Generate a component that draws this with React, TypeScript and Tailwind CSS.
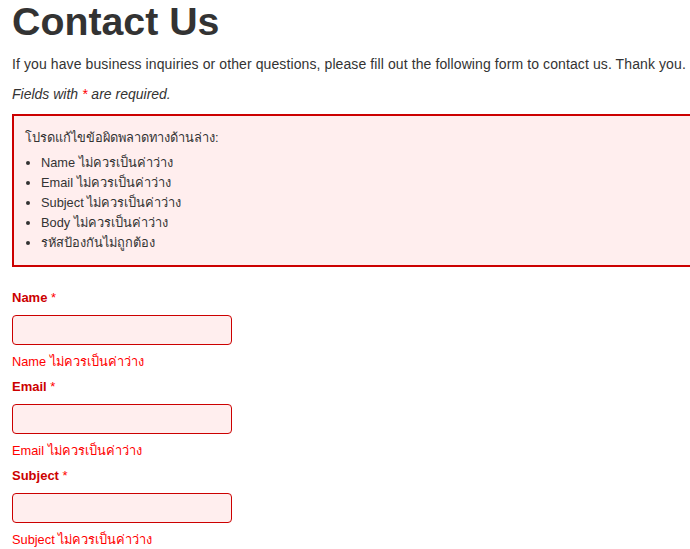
const errors = [
  "Name ไม่ควรเป็นค่าว่าง",
  "Email ไม่ควรเป็นค่าว่าง",
  "Subject ไม่ควรเป็นค่าว่าง",
  "Body ไม่ควรเป็นค่าว่าง",
  "รหัสป้องกันไม่ถูกต้อง",
];

const fields = [
  { label: "Name", error: "Name ไม่ควรเป็นค่าว่าง" },
  { label: "Email", error: "Email ไม่ควรเป็นค่าว่าง" },
  { label: "Subject", error: "Subject ไม่ควรเป็นค่าว่าง" },
];

// Field row: bold red label, pink error input, red message below.
function Field({ label, error }: { label: string; error: string }) {
  return (
    <div>
      <label className="block h-[20px] text-[13px] leading-[20px] font-bold text-[#c00]">
        {label} <span className="font-normal text-[#f00]">*</span>
      </label>
      <input
        type="text"
        className="mt-[7px] block h-[30px] w-[220px] rounded-[4px] border border-[#c00] bg-[#fee] px-[6px] outline-none"
      />
      <div className="mt-[7px] mb-[5px] text-[12.8px] leading-[20px] text-[#f00]">{error}</div>
    </div>
  );
}

export default function App() {
  return (
    <div
      className="min-h-screen overflow-x-hidden bg-white px-[12px] text-[14px] leading-[20px] text-[#333]"
      style={{ fontFamily: '"Liberation Sans", Arial, "DejaVu Sans", sans-serif' }}
    >
      <h1 className="mt-[1px] mb-[13px] text-[39.3px] leading-[40px] font-bold">Contact Us</h1>

      <p className="mb-[10px] whitespace-nowrap tracking-[0.1px]">
        If you have business inquiries or other questions, please fill out the following form to contact us. Thank you.
      </p>

      <p className="mb-[10px] italic">
        Fields with <span className="text-[#f00]">*</span> are required.
      </p>

      {/* Error summary box runs past the right edge of the viewport */}
      <div className="mb-[21px] w-[720px] border-2 border-[#c00] bg-[#fee] pt-[12px] pb-[12px] pl-[11px] text-[12.8px] leading-[20px]">
        <p className="mb-[5px]">โปรดแก้ไขข้อผิดพลาดทางด้านล่าง:</p>
        <ul className="list-disc pl-[16px]">
          {errors.map((e) => (
            <li key={e}>{e}</li>
          ))}
        </ul>
      </div>

      <form>
        {fields.map((f) => (
          <Field key={f.label} label={f.label} error={f.error} />
        ))}
      </form>
    </div>
  );
}
